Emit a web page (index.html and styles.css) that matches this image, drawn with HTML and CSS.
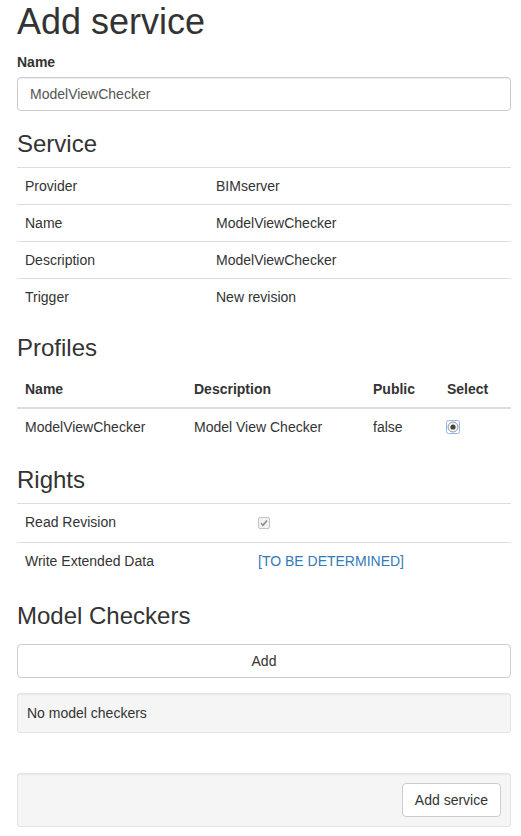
FILE: index.html
```html
<!DOCTYPE html>
<html>
<head>
<meta charset="utf-8">
<title>Add service</title>
<link rel="stylesheet" href="styles.css">
</head>
<body>
<div class="page">
  <h1 class="title">Add service</h1>
  <div class="form-group">
    <label class="label">Name</label>
    <input class="form-control" type="text" value="ModelViewChecker">
  </div>

  <h3 class="section">Service</h3>
  <table class="table">
    <colgroup><col class="c-service"><col></colgroup>
    <tbody>
      <tr><td>Provider</td><td>BIMserver</td></tr>
      <tr><td>Name</td><td>ModelViewChecker</td></tr>
      <tr><td>Description</td><td>ModelViewChecker</td></tr>
      <tr><td>Trigger</td><td>New revision</td></tr>
    </tbody>
  </table>

  <h3 class="section">Profiles</h3>
  <table class="table profiles">
    <colgroup><col class="c-p1"><col class="c-p2"><col class="c-p3"><col></colgroup>
    <thead>
      <tr><th>Name</th><th>Description</th><th>Public</th><th>Select</th></tr>
    </thead>
    <tbody>
      <tr>
        <td>ModelViewChecker</td>
        <td>Model View Checker</td>
        <td>false</td>
        <td><span class="radio"><svg width="14" height="14" viewBox="0 0 14 14"><rect x="0.5" y="0.5" width="13" height="13" rx="2" fill="#fff" stroke="#8fb5f0"/><circle cx="7" cy="7" r="5" fill="#eaeaea" stroke="#9a9a9a" stroke-width="1"/><circle cx="7" cy="7" r="4" fill="#f7f7f7"/><circle cx="7" cy="7" r="2.6" fill="#444"/></svg></span></td>
      </tr>
    </tbody>
  </table>

  <h3 class="section">Rights</h3>
  <table class="table rights">
    <colgroup><col class="c-rights"><col></colgroup>
    <tbody>
      <tr class="row-check"><td>Read Revision</td><td><span class="checkbox"><svg width="12" height="12" viewBox="0 0 12 12"><rect x="0.5" y="0.5" width="11" height="11" rx="1.5" fill="#f2f2f2" stroke="#c4c4c4"/><path d="M3 6.2 L5 8.2 L9 3.5" fill="none" stroke="#8d8d8d" stroke-width="1.6"/></svg></span></td></tr>
      <tr><td>Write Extended Data</td><td><a class="link" href="#">[TO BE DETERMINED]</a></td></tr>
    </tbody>
  </table>

  <h3 class="section mc">Model Checkers</h3>
  <button class="btn btn-block" type="button">Add</button>
  <div class="well">No model checkers</div>

  <div class="well footer">
    <button class="btn" type="button">Add service</button>
  </div>
</div>
</body>
</html>
```

FILE: styles.css
```css
* { box-sizing: border-box; }
html, body { margin: 0; padding: 0; background: #fff; }
body {
  font-family: "Liberation Sans", Arial, sans-serif;
  font-size: 14px;
  line-height: 20px;
  color: #333;
}
.page { padding: 0 10px 0 17px; }

.title {
  font-size: 36px;
  font-weight: 500;
  line-height: 39.6px;
  margin: 2px 0 10px;
}
.form-group { margin-bottom: 15px; }
.label {
  display: block;
  font-weight: bold;
  margin-bottom: 5px;
}
.form-control {
  display: block;
  width: 100%;
  height: 34px;
  padding: 6px 12px;
  font-family: inherit;
  font-size: 14px;
  color: #555;
  background: #fff;
  border: 1px solid #ccc;
  border-radius: 4px;
  box-shadow: inset 0 1px 1px rgba(0,0,0,.075);
}

.section {
  font-size: 24px;
  font-weight: 500;
  line-height: 26.4px;
  margin: 20px 0 10px;
}

.table {
  width: 100%;
  border-collapse: collapse;
  border-spacing: 0;
  table-layout: fixed;
  margin-bottom: 20px;
}
.table td, .table th {
  padding: 8px;
  line-height: 20px;
  text-align: left;
  vertical-align: top;
  border-top: 1px solid #ddd;
}
.table th {
  font-weight: bold;
  border-top: 0;
  border-bottom: 2px solid #ddd;
  vertical-align: bottom;
}
.profiles { margin-bottom: 21.5px; }
.profiles tbody td { border-top: 0; }
.rights { margin-bottom: 24px; }

.c-service { width: 191px; }
.c-p1 { width: 169px; }
.c-p2 { width: 179px; }
.c-p3 { width: 74px; }
.c-rights { width: 233px; }

.radio { display: inline-block; margin: 3px 0 0 -1px; height: 14px; vertical-align: top; }
.radio svg, .checkbox svg { display: block; }
.checkbox { display: inline-block; margin: 5px 0 0 0; vertical-align: top; }
.row-check td { padding-top: 8px; padding-bottom: 10px; }

.link { color: #337ab7; text-decoration: none; }

.mc { margin-bottom: 14px; }

.btn {
  display: inline-block;
  height: 34px;
  padding: 6px 12px;
  font-family: inherit;
  font-size: 14px;
  line-height: 20px;
  color: #333;
  background: #fff;
  border: 1px solid #ccc;
  border-radius: 4px;
  cursor: pointer;
}
.btn-block { display: block; width: 100%; margin-bottom: 15px; }

.well {
  padding: 9px;
  background: #f5f5f5;
  border: 1px solid #e3e3e3;
  border-radius: 3px;
  box-shadow: inset 0 1px 1px rgba(0,0,0,.05);
  margin-bottom: 20px;
}
.footer {
  margin-top: 40px;
  display: flex;
  justify-content: flex-end;
}
```
